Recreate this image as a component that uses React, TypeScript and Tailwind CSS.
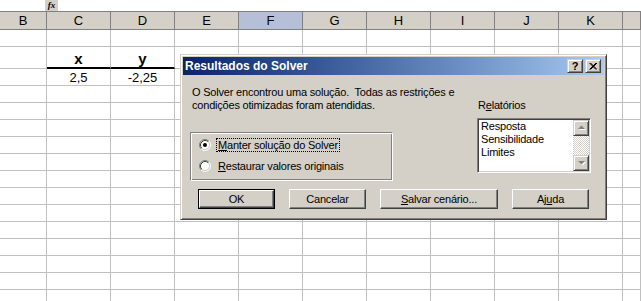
import React from "react";

const COLS = ["B", "C", "D", "E", "F", "G", "H", "I", "J", "K", ""];

function Radio({ checked }: { checked?: boolean }) {
  return (
    <svg width="12" height="12" viewBox="0 0 12 12" className="shrink-0">
      <circle cx="6" cy="6" r="4.5" fill="#fff" />
      <path d="M2.11 9.89 A5.5 5.5 0 0 1 9.89 2.11" fill="none" stroke="#808080" strokeWidth="1" />
      <path d="M9.89 2.11 A5.5 5.5 0 0 1 2.11 9.89" fill="none" stroke="#ffffff" strokeWidth="1" />
      <path d="M2.82 9.18 A4.5 4.5 0 0 1 9.18 2.82" fill="none" stroke="#404040" strokeWidth="1" />
      <path d="M9.18 2.82 A4.5 4.5 0 0 1 2.82 9.18" fill="none" stroke="#d4d0c8" strokeWidth="1" />
      {checked && <circle cx="6" cy="6" r="2" fill="#000" />}
    </svg>
  );
}

function Btn({ children, w, def }: { children: React.ReactNode; w: string; def?: boolean }) {
  const inner = (
    <div className="flex h-full w-full items-center justify-center border border-t-white border-l-white border-r-[#404040] border-b-[#404040] bg-[#d4d0c8] shadow-[inset_-1px_-1px_0_#808080]">
      {children}
    </div>
  );
  if (def) {
    return <div className={`${w} h-[20px] border border-black`}>{inner}</div>;
  }
  return <div className={`${w} h-[20px]`}>{inner}</div>;
}

function ScrollBtn({ up }: { up?: boolean }) {
  return (
    <div className="h-[16px] w-[16px] border border-t-[#d4d0c8] border-l-[#d4d0c8] border-r-[#404040] border-b-[#404040] bg-[#d4d0c8] shadow-[inset_1px_1px_0_#fff,inset_-1px_-1px_0_#808080] flex items-center justify-center">
      <svg width="9" height="6" viewBox="0 0 9 6">
        {up ? (
          <>
            <polygon points="2,5 9,5 5.5,1.5" fill="#fff" />
            <polygon points="1,4 8,4 4.5,0.5" fill="#808080" />
          </>
        ) : (
          <>
            <polygon points="2,2 9,2 5.5,5.5" fill="#fff" />
            <polygon points="1,1 8,1 4.5,4.5" fill="#808080" />
          </>
        )}
      </svg>
    </div>
  );
}

function Dialog() {
  return (
    <div className="absolute left-[180px] top-[54px] flex h-[166px] w-[427px] flex-col border border-t-[#d4d0c8] border-l-[#d4d0c8] border-r-[#404040] border-b-[#404040] bg-[#d4d0c8] p-[2px] shadow-[inset_1px_1px_0_#fff,inset_-1px_-1px_0_#808080] font-['Liberation_Sans',Arial,sans-serif] text-[11px] tracking-[-0.2px] text-black">
      {/* title bar */}
      <div className="flex h-[18px] shrink-0 items-center bg-gradient-to-r from-[#0a246a] to-[#a6caf0] pl-[2px] pr-[3px]">
        <span className="text-[12px] font-bold leading-[18px] tracking-normal text-white">Resultados do Solver</span>
        <div className="ml-auto flex gap-[2px]">
          <div className="flex h-[14px] w-[16px] items-center justify-center border border-t-[#d4d0c8] border-l-[#d4d0c8] border-r-[#404040] border-b-[#404040] bg-[#d4d0c8] shadow-[inset_1px_1px_0_#fff,inset_-1px_-1px_0_#808080]">
            <span className="text-[11px] font-bold leading-none">?</span>
          </div>
          <div className="flex h-[14px] w-[16px] items-center justify-center border border-t-[#d4d0c8] border-l-[#d4d0c8] border-r-[#404040] border-b-[#404040] bg-[#d4d0c8] shadow-[inset_1px_1px_0_#fff,inset_-1px_-1px_0_#808080]">
            <svg width="8" height="7" viewBox="0 0 8 7">
              <path d="M0.5 0 L7 6.5 M1.5 0 L8 6.5 M7 0 L0.5 6.5 M8 0 L1.5 6.5" stroke="#000" strokeWidth="1" />
            </svg>
          </div>
        </div>
      </div>

      {/* body */}
      <div className="flex flex-1 flex-col">
        <div className="flex">
          <div className="flex flex-1 flex-col">
            <p className="ml-[9px] mt-[11px] whitespace-pre leading-[13px]">
              {"O Solver encontrou uma solução.  Todas as restrições e\ncondições otimizadas foram atendidas."}
            </p>
            <div className="ml-[7px] mt-[20px] flex h-[49px] w-[203px] flex-col border border-[#808080] border-r-white border-b-white pl-[8px] pt-[5px] shadow-[inset_1px_1px_0_#fff,inset_-1px_-1px_0_#808080]">
              <div className="flex h-[14px] items-center gap-[5px]">
                <Radio checked />
                <span className="border border-dotted border-black px-[1px] leading-[12px]">
                  <u>M</u>anter solução do Solver
                </span>
              </div>
              <div className="mt-[7px] flex h-[14px] items-center gap-[5px]">
                <Radio />
                <span className="border border-transparent px-[1px] leading-[12px]">
                  <u>R</u>estaurar valores originais
                </span>
              </div>
            </div>
          </div>
          <div className="mr-[13px] flex w-[114px] flex-col">
            <div className="mt-[24px] pl-[1px] leading-[13px]">
              R<u>e</u>latórios
            </div>
            <div className="mt-[6px] flex h-[55px] border border-t-[#808080] border-l-[#808080] border-r-white border-b-white bg-white shadow-[inset_1px_1px_0_#404040,inset_-1px_-1px_0_#d4d0c8] p-[1px]">
              <div className="flex-1 pl-[2px] leading-[13px]">
                <div>Resposta</div>
                <div>Sensibilidade</div>
                <div>Limites</div>
              </div>
              <div className="flex w-[16px] flex-col">
                <ScrollBtn up />
                <div className="flex-1 bg-[repeating-conic-gradient(#d4d0c8_0_25%,#ffffff_0_50%)] bg-[length:2px_2px]" />
                <ScrollBtn />
              </div>
            </div>
          </div>
        </div>
        <div className="ml-[15px] mt-[8px] flex gap-[14px]">
          <Btn w="w-[77px]" def>
            OK
          </Btn>
          <Btn w="w-[77px]">Cancelar</Btn>
          <Btn w="w-[118px]">
            <span>
              <u>S</u>alvar cenário...
            </span>
          </Btn>
          <Btn w="w-[77px]">
            <span>
              Aj<u>u</u>da
            </span>
          </Btn>
        </div>
      </div>
    </div>
  );
}

export default function App() {
  const rows: { h: string; kind?: "hdr" | "val" }[] = [
    { h: "h-[17px]" },
    { h: "h-[22px]", kind: "hdr" },
    { h: "h-[17px]", kind: "val" },
  ];
  for (let i = 0; i < 13; i++) rows.push({ h: "h-[17px]" });

  return (
    <div className="relative h-[301px] w-[641px] overflow-hidden bg-white font-['Liberation_Sans',Arial,sans-serif]">
      {/* formula bar strip */}
      <div className="flex h-[12px] border-b border-[#808080]">
        <div className="w-[45px] bg-white" />
        <div className="flex w-[13px] items-center justify-center bg-[#d4d0c8]">
          <span className="font-['Liberation_Serif',serif] text-[9px] font-bold italic leading-none">fx</span>
        </div>
        <div className="flex-1 bg-white" />
      </div>
      {/* column headers */}
      <div className="grid grid-cols-[47px_repeat(9,64px)_1fr]">
        {COLS.map((c, i) => (
          <div
            key={i}
            className={`flex h-[18px] items-center justify-center border-b border-r border-[#808080] text-[13px] leading-none ${
              c === "F" ? "bg-[#b6bfd8]" : "bg-[#d4d0c8]"
            }`}
          >
            {c}
          </div>
        ))}
      </div>
      {/* rows */}
      {rows.map((r, ri) => (
        <div key={ri} className="grid grid-cols-[47px_repeat(9,64px)_1fr]">
          {COLS.map((c, ci) => {
            const thick = r.kind === "hdr" && (ci === 1 || ci === 2);
            let content: React.ReactNode = null;
            if (r.kind === "hdr" && ci === 1) content = "x";
            if (r.kind === "hdr" && ci === 2) content = "y";
            if (r.kind === "val" && ci === 1) content = "2,5";
            if (r.kind === "val" && ci === 2) content = "-2,25";
            return (
              <div
                key={ci}
                className={`${r.h} flex items-end justify-center border-r border-[#c0c0c0] ${
                  thick ? "border-b-2 border-b-black" : "border-b"
                } ${r.kind === "hdr" ? "text-[15px] font-bold leading-[17px]" : "text-[13px] leading-[15px]"}`}
              >
                {content}
              </div>
            );
          })}
        </div>
      ))}
      <Dialog />
    </div>
  );
}
